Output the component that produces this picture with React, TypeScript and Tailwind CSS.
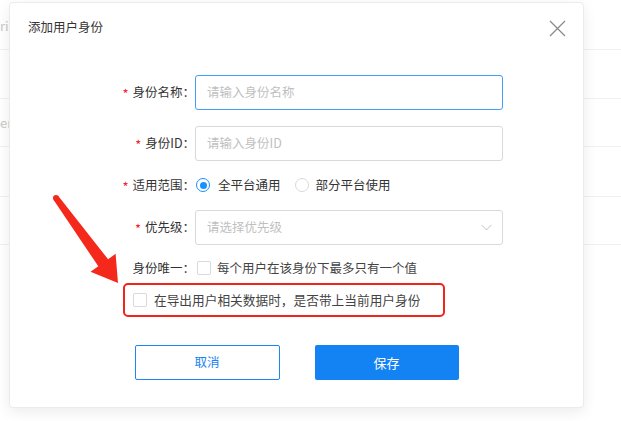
import React from 'react';

const Label: React.FC<{ text: string; required?: boolean }> = ({ text, required }) => (
  <div className="w-[185px] shrink-0 flex justify-end items-center text-[12.5px] text-[#333]">
    {required && <span className="text-[#f5222d] mr-[4px] text-[13px] leading-none pt-[2px]">*</span>}
    <span>{text}：</span>
  </div>
);

const Checkbox: React.FC = () => (
  <span className="block w-[14px] h-[14px] shrink-0 rounded-[2px] border border-[#d9d9d9] bg-white" />
);

const Radio: React.FC<{ checked?: boolean }> = ({ checked }) =>
  checked ? (
    <span className="w-[14px] h-[14px] shrink-0 rounded-full border border-[#1890ff] flex items-center justify-center">
      <span className="w-[7px] h-[7px] rounded-full bg-[#1890ff]" />
    </span>
  ) : (
    <span className="block w-[14px] h-[14px] shrink-0 rounded-full border border-[#d9d9d9]" />
  );

const App: React.FC = () => {
  const bgRows = [
    { h: 'h-[48px]', text: 'ric' },
    { h: 'h-[49px]', text: '' },
    { h: 'h-[48px]', text: 'er' },
    { h: 'h-[50px]', text: '' },
    { h: 'h-[48px]', text: '' },
  ];

  return (
    <div
      className="relative w-[621px] h-[421px] overflow-hidden bg-white"
      style={{ fontFamily: '"Noto Sans CJK SC", "Noto Sans", sans-serif' }}
    >
      {/* Background table */}
      <div className="flex flex-col pt-[2px]">
        {bgRows.map((row, i) => (
          <div
            key={i}
            className={`${row.h} border-b border-[#f0f0f0] flex items-center text-[13px] text-[#c8c8c8]`}
          >
            {row.text}
          </div>
        ))}
      </div>

      {/* Modal */}
      <div className="absolute left-[9px] top-[2px] w-[575px] h-[406px] bg-white rounded-[4px] border border-[#ebebeb] shadow-[0_4px_14px_rgba(0,0,0,0.08)] flex flex-col">
        <div className="flex items-center justify-between pl-[18px] pr-[17px] pt-[14px] h-[34px]">
          <span className="text-[12.5px] text-[#333] leading-[20px]">添加用户身份</span>
          <svg width="17" height="17" viewBox="0 0 17 17" className="mt-[2px]">
            <path d="M1 1 L16 16 M16 1 L1 16" stroke="#8a8a8a" strokeWidth="1.3" fill="none" />
          </svg>
        </div>

        <div className="flex flex-col mt-[38px]">
          <div className="flex items-center h-[35px]">
            <Label text="身份名称" required />
            <div className="w-[308px] h-[35px] rounded-[3px] border border-[#40a0f5] px-[11px] flex items-center text-[12.5px] text-[#bfbfbf]">
              请输入身份名称
            </div>
          </div>

          <div className="flex items-center h-[35px] mt-[16px]">
            <Label text="身份ID" required />
            <div className="w-[308px] h-[35px] rounded-[3px] border border-[#d9d9d9] px-[11px] flex items-center text-[12.5px] text-[#bfbfbf]">
              请输入身份ID
            </div>
          </div>

          <div className="flex items-center h-[20px] mt-[14px]">
            <Label text="适用范围" required />
            <div className="flex items-center ml-[1px] text-[12.5px] text-[#333]">
              <Radio checked />
              <span className="ml-[8px]">全平台通用</span>
              <span className="ml-[14px] flex">
                <Radio />
              </span>
              <span className="ml-[7px]">部分平台使用</span>
            </div>
          </div>

          <div className="flex items-center h-[35px] mt-[15px]">
            <Label text="优先级" required />
            <div className="w-[308px] h-[35px] rounded-[3px] border border-[#d9d9d9] pl-[11px] pr-[10px] flex items-center justify-between text-[12.5px] text-[#bfbfbf]">
              <span>请选择优先级</span>
              <svg width="11" height="7" viewBox="0 0 11 7">
                <path d="M0.5 0.8 L5.5 6 L10.5 0.8" stroke="#c4c4c4" strokeWidth="1" fill="none" />
              </svg>
            </div>
          </div>

          <div className="flex items-center h-[20px] mt-[13px]">
            <Label text="身份唯一" />
            <div className="flex items-center ml-[2px] text-[12.5px] text-[#444]">
              <Checkbox />
              <span className="ml-[6px]">每个用户在该身份下最多只有一个值</span>
            </div>
          </div>

          <div className="ml-[113px] mt-[5px] w-[322px] h-[34px] rounded-[5px] border-2 border-[#f0241b] pl-[8px] flex items-center text-[12.7px] text-[#444]">
            <Checkbox />
            <span className="ml-[7px]">在导出用户相关数据时，是否带上当前用户身份</span>
          </div>

          <div className="flex justify-center gap-[35px] mt-[28px]">
            <button className="w-[145px] h-[35px] rounded-[2px] border border-[#1e86f2] bg-white text-[12.5px] text-[#1a84f2]">
              取消
            </button>
            <button className="w-[144px] h-[35px] rounded-[2px] bg-[#1383f4] text-[13px] text-white">
              保存
            </button>
          </div>
        </div>
      </div>

      {/* Annotation arrow */}
      <svg className="absolute inset-0 pointer-events-none" width="621" height="421" viewBox="0 0 621 421">
        <polygon
          points="53.5,199.8 98.3,266.3 90.5,271.8 118,283 115.6,253.8 108.1,259.3 58.5,196.2"
          fill="#f5281c"
        />
        <circle cx="56" cy="198" r="3" fill="#f5281c" />
      </svg>
    </div>
  );
};

export default App;
